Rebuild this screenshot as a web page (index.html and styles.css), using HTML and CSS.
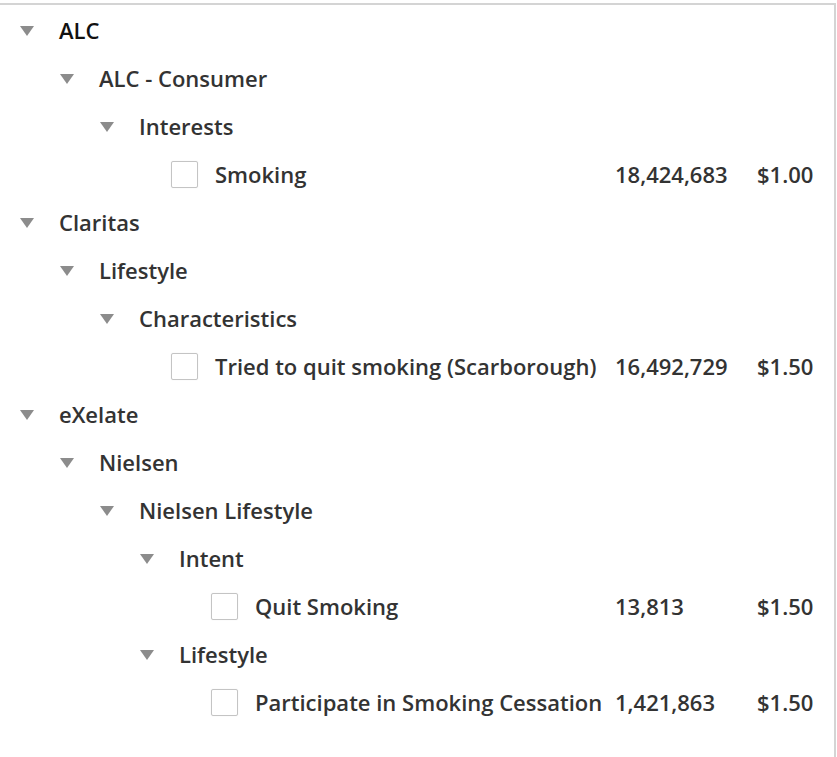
FILE: index.html
```html
<!DOCTYPE html>
<html lang="en">
<head>
  <meta charset="UTF-8">
  <title>Segments</title>
  <link rel="stylesheet" href="styles.css">
</head>
<body>
  <div id="panel">
    <ul class="tree">
      <li>
        <div class="node top"><span class="caret"></span><span class="name">ALC</span></div>
        <ul>
          <li>
            <div class="node"><span class="caret"></span><span class="name">ALC - Consumer</span></div>
            <ul>
              <li>
                <div class="node"><span class="caret"></span><span class="name">Interests</span></div>
                <ul>
                  <li>
                    <div class="node leaf"><span class="box"></span><span class="name">Smoking</span><span class="reach">18,424,683</span><span class="price">$1.00</span></div>
                  </li>
                </ul>
              </li>
            </ul>
          </li>
        </ul>
      </li>
      <li>
        <div class="node"><span class="caret"></span><span class="name">Claritas</span></div>
        <ul>
          <li>
            <div class="node"><span class="caret"></span><span class="name">Lifestyle</span></div>
            <ul>
              <li>
                <div class="node"><span class="caret"></span><span class="name">Characteristics</span></div>
                <ul>
                  <li>
                    <div class="node leaf"><span class="box"></span><span class="name">Tried to quit smoking (Scarborough)</span><span class="reach">16,492,729</span><span class="price">$1.50</span></div>
                  </li>
                </ul>
              </li>
            </ul>
          </li>
        </ul>
      </li>
      <li>
        <div class="node"><span class="caret"></span><span class="name">eXelate</span></div>
        <ul>
          <li>
            <div class="node"><span class="caret"></span><span class="name">Nielsen</span></div>
            <ul>
              <li>
                <div class="node"><span class="caret"></span><span class="name">Nielsen Lifestyle</span></div>
                <ul>
                  <li>
                    <div class="node"><span class="caret"></span><span class="name">Intent</span></div>
                    <ul>
                      <li>
                        <div class="node leaf"><span class="box"></span><span class="name">Quit Smoking</span><span class="reach">13,813</span><span class="price">$1.50</span></div>
                      </li>
                    </ul>
                  </li>
                  <li>
                    <div class="node"><span class="caret"></span><span class="name">Lifestyle</span></div>
                    <ul>
                      <li>
                        <div class="node leaf"><span class="box"></span><span class="name">Participate in Smoking Cessation</span><span class="reach">1,421,863</span><span class="price">$1.50</span></div>
                      </li>
                    </ul>
                  </li>
                </ul>
              </li>
            </ul>
          </li>
        </ul>
      </li>
    </ul>
  </div>
</body>
</html>
```

FILE: styles.css
```css
html, body {
  margin: 0;
  padding: 0;
  background: #fff;
  font-family: "Open Sans", Arial, sans-serif;
}
body {
  padding-top: 3px;
}
#panel {
  width: 834px;
  min-height: 760px;
  border-top: 2px solid #d4d4d4;
  border-right: 2px solid #d4d4d4;
  padding-top: 1px;
  box-sizing: content-box;
}
.tree, .tree ul {
  list-style: none;
  margin: 0;
  padding: 0;
}
.tree ul {
  padding-left: 40px;
}
.node {
  display: flex;
  align-items: center;
  height: 48px;
  padding-left: 20px;
  font-size: 22px;
  font-weight: 600;
  color: #333;
  white-space: nowrap;
}
.node.top {
  color: #111;
}
.caret {
  width: 0;
  height: 0;
  border-left: 7.5px solid transparent;
  border-right: 7.5px solid transparent;
  border-top: 10px solid #8c8c8c;
  margin-right: 25px;
  margin-top: 1px;
  flex: none;
}
.box {
  width: 25px;
  height: 25px;
  border: 1px solid #c4c4c4;
  border-radius: 2px;
  box-shadow: 0 0 1px rgba(0, 0, 0, 0.15);
  margin-left: 31px;
  margin-right: 17px;
  flex: none;
}
.leaf .name {
  flex: 1;
  min-width: 0;
}
.reach {
  width: 142px;
  flex: none;
}
.price {
  width: 77px;
  flex: none;
}
```
